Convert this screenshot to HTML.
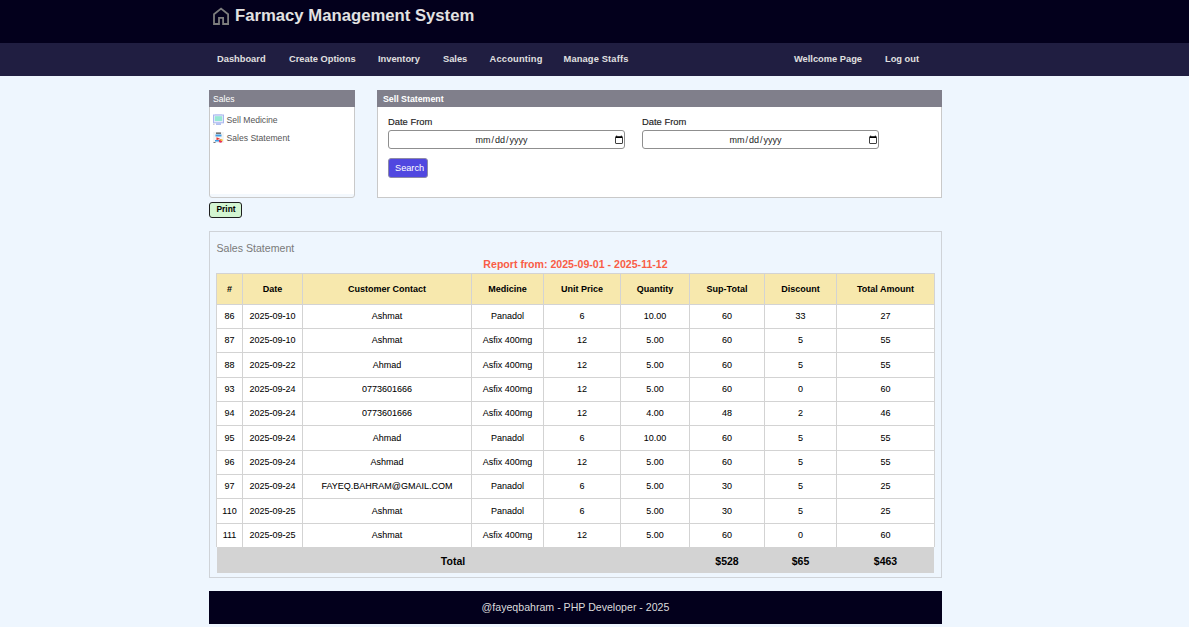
<!DOCTYPE html>
<html><head><meta charset="utf-8">
<style>
*{margin:0;padding:0;box-sizing:border-box}
html,body{width:1189px;height:627px;overflow:hidden;background:#eef6fe;font-family:"Liberation Sans",sans-serif}
.abs{position:absolute;white-space:nowrap}
#hdr{position:absolute;left:0;top:0;width:1189px;height:43px;background:#03001c}
#nav{position:absolute;left:0;top:43px;width:1189px;height:33px;background:#201e41}
.title{left:235px;top:6px;font-size:16.7px;font-weight:bold;color:#e2e2e2}
.nv{top:53px;font-size:9.3px;font-weight:bold;color:#e0e0e0;line-height:12px}
.panel{position:absolute;background:#fff;border:1px solid #c9c9c9}
.ph{position:absolute;left:-1px;top:-1px;right:-1px;height:17px;background:#807f8b;color:#fff;font-size:9px;line-height:19px}
.r{position:absolute;white-space:nowrap;text-align:center;overflow:visible}
.th{font-size:9px;font-weight:bold;color:#000}
.td{font-size:9px;color:#000;-webkit-text-stroke:0.05px #000}
.tt{font-size:10.5px;font-weight:bold;color:#000}
.lbl{font-size:9.4px;color:#222;-webkit-text-stroke:0.15px #222;line-height:12px}
.din{position:absolute;width:237px;height:19px;border:1px solid #8f8f8f;border-radius:3px;background:#fff;font-size:9px;text-align:center;padding:0;color:#222;font-family:"Liberation Sans",sans-serif}
.side{font-size:8.6px;color:#555;line-height:12px}
.din::-webkit-calendar-picker-indicator{margin:0 -1px 0 0;padding:0 1px 0 0;width:10px;height:10px}
</style></head><body>
<div id="hdr"></div>
<div id="nav"></div>
<svg class="abs" style="left:212px;top:6px" width="19" height="20" viewBox="0 0 19 20">
<path d="M2 18 V8.3 L9.05 2.6 L16.1 8.3 V18 H11.1 V11.9 H7 V18 Z" fill="none" stroke="#7d7d7d" stroke-width="1.8" stroke-linejoin="miter"/>
</svg>
<div class="abs title">Farmacy Management System</div>
<div class="abs nv" style="left:217px">Dashboard</div>
<div class="abs nv" style="left:289px">Create Options</div>
<div class="abs nv" style="left:378px">Inventory</div>
<div class="abs nv" style="left:443px">Sales</div>
<div class="abs nv" style="left:489.5px;letter-spacing:0.2px">Accounting</div>
<div class="abs nv" style="left:563.5px;letter-spacing:0.15px">Manage Staffs</div>
<div class="abs nv" style="left:794px">Wellcome Page</div>
<div class="abs nv" style="left:885px">Log out</div>

<!-- Sales panel -->
<div class="panel" style="left:209px;top:90px;width:146px;height:108px;border-radius:0 0 3px 3px;background:#f3f8fd">
  <div style="position:absolute;left:0;top:16px;right:0;height:87px;background:#fff"></div>
  <div class="ph" style="padding-left:4px;font-size:8.6px">Sales</div>
</div>
<!-- Sell statement panel -->
<div class="panel" style="left:377px;top:90px;width:565px;height:108px">
  <div class="ph" style="padding-left:6px;font-weight:bold;font-size:8.8px">Sell Statement</div>
</div>
<div class="abs lbl" style="left:388px;top:116px">Date From</div>
<div class="abs lbl" style="left:642px;top:116px">Date From</div>
<input type="date" class="din" style="left:388px;top:130px">
<input type="date" class="din" style="left:642px;top:130px">
<div class="abs" style="left:388px;top:158px;width:40px;height:20px;background:#5047e0;border:1px solid #8d8aa8;border-radius:3px;color:#fff;font-size:9.2px;line-height:18px;padding-left:6px">Search</div>
<svg class="abs" style="left:212px;top:113px" width="13" height="13" viewBox="0 0 13 13">
<rect x="1.5" y="2" width="10" height="7.8" fill="#e6ebfb" stroke="#a9b7ef" stroke-width="1"/>
<rect x="3" y="1" width="7" height="1" fill="#c3cdf4"/>
<rect x="2.8" y="3.2" width="7.4" height="4.8" fill="#97e8d4"/>
<rect x="4" y="10.3" width="5" height="1.6" fill="#a9b7ef"/>
<rect x="1" y="10.6" width="1.6" height="1.4" fill="#cfcfcf"/>
</svg>
<svg class="abs" style="left:212px;top:131px" width="13" height="13" viewBox="0 0 13 13">
<rect x="1" y="1" width="11" height="11" fill="#f4f4f4"/>
<rect x="4" y="1.5" width="5" height="1.3" fill="#555"/>
<rect x="3.5" y="3.5" width="6" height="2" fill="#3f9ee6"/>
<path d="M4.5 6.3 L8 7.8 L4.5 9.3 Z" fill="#e8312c"/>
<rect x="3" y="9" width="5" height="1.5" fill="#3f9ee6"/>
<circle cx="8.6" cy="10" r="1.8" fill="#e8315c"/>
<circle cx="9.6" cy="9" r="1.1" fill="#f7d431"/>
<rect x="1.5" y="11" width="2" height="0.8" fill="#555"/>
</svg>
<div class="abs side" style="left:226.5px;top:114px">Sell Medicine</div>
<div class="abs side" style="left:226.5px;top:132px">Sales Statement</div>

<!-- Print button -->
<div class="abs" style="left:209px;top:202px;width:33px;height:16px;border:1px solid #1e1e1e;border-radius:3px;background:#d3f5d1;font-size:8.4px;font-weight:bold;line-height:13px;text-align:center;color:#000;padding-left:1px">Print</div>

<!-- Sales statement container -->
<div class="abs" style="left:209px;top:231px;width:733px;height:347px;border:1px solid #cfd3d8;background:#eef6fe"></div>

<div class="abs" style="left:216.5px;top:241px;font-size:10.6px;line-height:14px;color:#7a7a7a">Sales Statement</div>
<div class="abs" style="left:216px;top:257px;width:719px;text-align:center;font-size:10.6px;line-height:14px;font-weight:bold;color:#f95d47">Report from: 2025-09-01 - 2025-11-12</div>
<div class="r" style="left:216px;top:273px;width:719px;height:274px;background:#fff"></div>
<div class="r" style="left:217px;top:274px;width:717px;height:30px;background:#f7e8ad"></div>
<div class="r" style="left:216px;top:273px;width:719px;height:1px;background:#d3d3d3"></div>
<div class="r" style="left:216px;top:304px;width:719px;height:1px;background:#d3d3d3"></div>
<div class="r" style="left:216px;top:328px;width:719px;height:1px;background:#d3d3d3"></div>
<div class="r" style="left:216px;top:352px;width:719px;height:1px;background:#d3d3d3"></div>
<div class="r" style="left:216px;top:377px;width:719px;height:1px;background:#d3d3d3"></div>
<div class="r" style="left:216px;top:401px;width:719px;height:1px;background:#d3d3d3"></div>
<div class="r" style="left:216px;top:425px;width:719px;height:1px;background:#d3d3d3"></div>
<div class="r" style="left:216px;top:450px;width:719px;height:1px;background:#d3d3d3"></div>
<div class="r" style="left:216px;top:474px;width:719px;height:1px;background:#d3d3d3"></div>
<div class="r" style="left:216px;top:498px;width:719px;height:1px;background:#d3d3d3"></div>
<div class="r" style="left:216px;top:523px;width:719px;height:1px;background:#d3d3d3"></div>
<div class="r" style="left:216px;top:273px;width:1px;height:274px;background:#d3d3d3"></div>
<div class="r" style="left:242px;top:273px;width:1px;height:274px;background:#d3d3d3"></div>
<div class="r" style="left:302px;top:273px;width:1px;height:274px;background:#d3d3d3"></div>
<div class="r" style="left:471px;top:273px;width:1px;height:274px;background:#d3d3d3"></div>
<div class="r" style="left:543px;top:273px;width:1px;height:274px;background:#d3d3d3"></div>
<div class="r" style="left:620px;top:273px;width:1px;height:274px;background:#d3d3d3"></div>
<div class="r" style="left:689px;top:273px;width:1px;height:274px;background:#d3d3d3"></div>
<div class="r" style="left:764px;top:273px;width:1px;height:274px;background:#d3d3d3"></div>
<div class="r" style="left:836px;top:273px;width:1px;height:274px;background:#d3d3d3"></div>
<div class="r" style="left:934px;top:273px;width:1px;height:274px;background:#d3d3d3"></div>
<div class="r th" style="left:217px;top:274px;width:25px;height:30px;line-height:30px">#</div>
<div class="r th" style="left:243px;top:274px;width:59px;height:30px;line-height:30px">Date</div>
<div class="r th" style="left:303px;top:274px;width:168px;height:30px;line-height:30px">Customer Contact</div>
<div class="r th" style="left:472px;top:274px;width:71px;height:30px;line-height:30px">Medicine</div>
<div class="r th" style="left:544px;top:274px;width:76px;height:30px;line-height:30px">Unit Price</div>
<div class="r th" style="left:621px;top:274px;width:68px;height:30px;line-height:30px">Quantity</div>
<div class="r th" style="left:690px;top:274px;width:74px;height:30px;line-height:30px">Sup-Total</div>
<div class="r th" style="left:765px;top:274px;width:71px;height:30px;line-height:30px">Discount</div>
<div class="r th" style="left:837px;top:274px;width:97px;height:30px;line-height:30px">Total Amount</div>
<div class="r td" style="left:217px;top:305px;width:25px;height:23px;line-height:23px">86</div>
<div class="r td" style="left:243px;top:305px;width:59px;height:23px;line-height:23px">2025-09-10</div>
<div class="r td" style="left:303px;top:305px;width:168px;height:23px;line-height:23px">Ashmat</div>
<div class="r td" style="left:472px;top:305px;width:71px;height:23px;line-height:23px">Panadol</div>
<div class="r td" style="left:544px;top:305px;width:76px;height:23px;line-height:23px">6</div>
<div class="r td" style="left:621px;top:305px;width:68px;height:23px;line-height:23px">10.00</div>
<div class="r td" style="left:690px;top:305px;width:74px;height:23px;line-height:23px">60</div>
<div class="r td" style="left:765px;top:305px;width:71px;height:23px;line-height:23px">33</div>
<div class="r td" style="left:837px;top:305px;width:97px;height:23px;line-height:23px">27</div>
<div class="r td" style="left:217px;top:329px;width:25px;height:23px;line-height:23px">87</div>
<div class="r td" style="left:243px;top:329px;width:59px;height:23px;line-height:23px">2025-09-10</div>
<div class="r td" style="left:303px;top:329px;width:168px;height:23px;line-height:23px">Ashmat</div>
<div class="r td" style="left:472px;top:329px;width:71px;height:23px;line-height:23px">Asfix 400mg</div>
<div class="r td" style="left:544px;top:329px;width:76px;height:23px;line-height:23px">12</div>
<div class="r td" style="left:621px;top:329px;width:68px;height:23px;line-height:23px">5.00</div>
<div class="r td" style="left:690px;top:329px;width:74px;height:23px;line-height:23px">60</div>
<div class="r td" style="left:765px;top:329px;width:71px;height:23px;line-height:23px">5</div>
<div class="r td" style="left:837px;top:329px;width:97px;height:23px;line-height:23px">55</div>
<div class="r td" style="left:217px;top:353px;width:25px;height:24px;line-height:24px">88</div>
<div class="r td" style="left:243px;top:353px;width:59px;height:24px;line-height:24px">2025-09-22</div>
<div class="r td" style="left:303px;top:353px;width:168px;height:24px;line-height:24px">Ahmad</div>
<div class="r td" style="left:472px;top:353px;width:71px;height:24px;line-height:24px">Asfix 400mg</div>
<div class="r td" style="left:544px;top:353px;width:76px;height:24px;line-height:24px">12</div>
<div class="r td" style="left:621px;top:353px;width:68px;height:24px;line-height:24px">5.00</div>
<div class="r td" style="left:690px;top:353px;width:74px;height:24px;line-height:24px">60</div>
<div class="r td" style="left:765px;top:353px;width:71px;height:24px;line-height:24px">5</div>
<div class="r td" style="left:837px;top:353px;width:97px;height:24px;line-height:24px">55</div>
<div class="r td" style="left:217px;top:378px;width:25px;height:23px;line-height:23px">93</div>
<div class="r td" style="left:243px;top:378px;width:59px;height:23px;line-height:23px">2025-09-24</div>
<div class="r td" style="left:303px;top:378px;width:168px;height:23px;line-height:23px">0773601666</div>
<div class="r td" style="left:472px;top:378px;width:71px;height:23px;line-height:23px">Asfix 400mg</div>
<div class="r td" style="left:544px;top:378px;width:76px;height:23px;line-height:23px">12</div>
<div class="r td" style="left:621px;top:378px;width:68px;height:23px;line-height:23px">5.00</div>
<div class="r td" style="left:690px;top:378px;width:74px;height:23px;line-height:23px">60</div>
<div class="r td" style="left:765px;top:378px;width:71px;height:23px;line-height:23px">0</div>
<div class="r td" style="left:837px;top:378px;width:97px;height:23px;line-height:23px">60</div>
<div class="r td" style="left:217px;top:402px;width:25px;height:23px;line-height:23px">94</div>
<div class="r td" style="left:243px;top:402px;width:59px;height:23px;line-height:23px">2025-09-24</div>
<div class="r td" style="left:303px;top:402px;width:168px;height:23px;line-height:23px">0773601666</div>
<div class="r td" style="left:472px;top:402px;width:71px;height:23px;line-height:23px">Asfix 400mg</div>
<div class="r td" style="left:544px;top:402px;width:76px;height:23px;line-height:23px">12</div>
<div class="r td" style="left:621px;top:402px;width:68px;height:23px;line-height:23px">4.00</div>
<div class="r td" style="left:690px;top:402px;width:74px;height:23px;line-height:23px">48</div>
<div class="r td" style="left:765px;top:402px;width:71px;height:23px;line-height:23px">2</div>
<div class="r td" style="left:837px;top:402px;width:97px;height:23px;line-height:23px">46</div>
<div class="r td" style="left:217px;top:426px;width:25px;height:24px;line-height:24px">95</div>
<div class="r td" style="left:243px;top:426px;width:59px;height:24px;line-height:24px">2025-09-24</div>
<div class="r td" style="left:303px;top:426px;width:168px;height:24px;line-height:24px">Ahmad</div>
<div class="r td" style="left:472px;top:426px;width:71px;height:24px;line-height:24px">Panadol</div>
<div class="r td" style="left:544px;top:426px;width:76px;height:24px;line-height:24px">6</div>
<div class="r td" style="left:621px;top:426px;width:68px;height:24px;line-height:24px">10.00</div>
<div class="r td" style="left:690px;top:426px;width:74px;height:24px;line-height:24px">60</div>
<div class="r td" style="left:765px;top:426px;width:71px;height:24px;line-height:24px">5</div>
<div class="r td" style="left:837px;top:426px;width:97px;height:24px;line-height:24px">55</div>
<div class="r td" style="left:217px;top:451px;width:25px;height:23px;line-height:23px">96</div>
<div class="r td" style="left:243px;top:451px;width:59px;height:23px;line-height:23px">2025-09-24</div>
<div class="r td" style="left:303px;top:451px;width:168px;height:23px;line-height:23px">Ashmad</div>
<div class="r td" style="left:472px;top:451px;width:71px;height:23px;line-height:23px">Asfix 400mg</div>
<div class="r td" style="left:544px;top:451px;width:76px;height:23px;line-height:23px">12</div>
<div class="r td" style="left:621px;top:451px;width:68px;height:23px;line-height:23px">5.00</div>
<div class="r td" style="left:690px;top:451px;width:74px;height:23px;line-height:23px">60</div>
<div class="r td" style="left:765px;top:451px;width:71px;height:23px;line-height:23px">5</div>
<div class="r td" style="left:837px;top:451px;width:97px;height:23px;line-height:23px">55</div>
<div class="r td" style="left:217px;top:475px;width:25px;height:23px;line-height:23px">97</div>
<div class="r td" style="left:243px;top:475px;width:59px;height:23px;line-height:23px">2025-09-24</div>
<div class="r td" style="left:303px;top:475px;width:168px;height:23px;line-height:23px">FAYEQ.BAHRAM@GMAIL.COM</div>
<div class="r td" style="left:472px;top:475px;width:71px;height:23px;line-height:23px">Panadol</div>
<div class="r td" style="left:544px;top:475px;width:76px;height:23px;line-height:23px">6</div>
<div class="r td" style="left:621px;top:475px;width:68px;height:23px;line-height:23px">5.00</div>
<div class="r td" style="left:690px;top:475px;width:74px;height:23px;line-height:23px">30</div>
<div class="r td" style="left:765px;top:475px;width:71px;height:23px;line-height:23px">5</div>
<div class="r td" style="left:837px;top:475px;width:97px;height:23px;line-height:23px">25</div>
<div class="r td" style="left:217px;top:499px;width:25px;height:24px;line-height:24px">110</div>
<div class="r td" style="left:243px;top:499px;width:59px;height:24px;line-height:24px">2025-09-25</div>
<div class="r td" style="left:303px;top:499px;width:168px;height:24px;line-height:24px">Ashmat</div>
<div class="r td" style="left:472px;top:499px;width:71px;height:24px;line-height:24px">Panadol</div>
<div class="r td" style="left:544px;top:499px;width:76px;height:24px;line-height:24px">6</div>
<div class="r td" style="left:621px;top:499px;width:68px;height:24px;line-height:24px">5.00</div>
<div class="r td" style="left:690px;top:499px;width:74px;height:24px;line-height:24px">30</div>
<div class="r td" style="left:765px;top:499px;width:71px;height:24px;line-height:24px">5</div>
<div class="r td" style="left:837px;top:499px;width:97px;height:24px;line-height:24px">25</div>
<div class="r td" style="left:217px;top:524px;width:25px;height:23px;line-height:23px">111</div>
<div class="r td" style="left:243px;top:524px;width:59px;height:23px;line-height:23px">2025-09-25</div>
<div class="r td" style="left:303px;top:524px;width:168px;height:23px;line-height:23px">Ashmat</div>
<div class="r td" style="left:472px;top:524px;width:71px;height:23px;line-height:23px">Asfix 400mg</div>
<div class="r td" style="left:544px;top:524px;width:76px;height:23px;line-height:23px">12</div>
<div class="r td" style="left:621px;top:524px;width:68px;height:23px;line-height:23px">5.00</div>
<div class="r td" style="left:690px;top:524px;width:74px;height:23px;line-height:23px">60</div>
<div class="r td" style="left:765px;top:524px;width:71px;height:23px;line-height:23px">0</div>
<div class="r td" style="left:837px;top:524px;width:97px;height:23px;line-height:23px">60</div>
<div class="r" style="left:217px;top:547px;width:717px;height:26px;background:#d3d3d3"></div>
<div class="r tt" style="left:217px;top:548px;width:472px;height:26px;line-height:26px">Total</div>
<div class="r tt" style="left:690px;top:548px;width:74px;height:26px;line-height:26px">$528</div>
<div class="r tt" style="left:765px;top:548px;width:71px;height:26px;line-height:26px">$65</div>
<div class="r tt" style="left:837px;top:548px;width:97px;height:26px;line-height:26px">$463</div>
<!-- Footer -->
<div class="abs" style="left:209px;top:591px;width:733px;height:33px;background:#03001c;color:#dcdcdc;font-size:10.6px;line-height:33px;text-align:center">@fayeqbahram - PHP Developer - 2025</div>
</body></html>
